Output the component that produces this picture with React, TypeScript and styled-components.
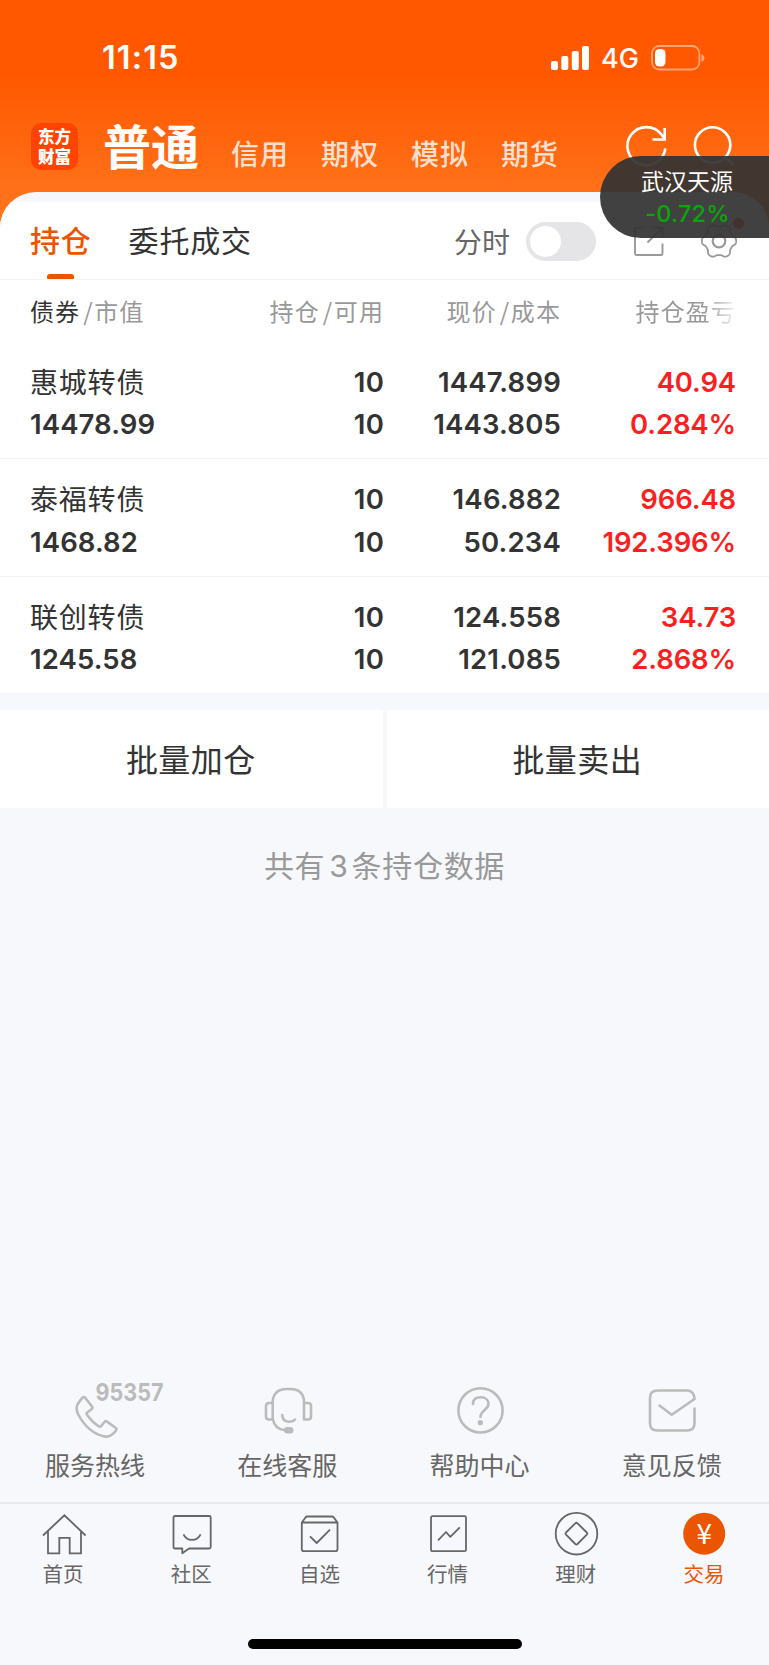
import React from 'react';
import styled, { createGlobalStyle, css } from 'styled-components';

const cjk = '"Noto Sans CJK SC", sans-serif';
const latin = 'Inter, "Noto Sans CJK SC", sans-serif';
const accent = '#eb5500';

const GlobalStyle = createGlobalStyle`
  *, *::before, *::after { box-sizing: border-box; }
  body { margin: 0; background: #f7f8fa; font-family: ${cjk}; color: #333; }
  svg { display: block; flex: none; overflow: visible; }
`;

const Screen = styled.div`
  position: relative;
  display: flex;
  flex-direction: column;
  width: 769px;
  height: 1665px;
  overflow: hidden;
  background: linear-gradient(#ff5800 0, #ff5800 74px, #ff7119 192px, #ff7620 240px, #f7f8fb 240px);
`;

const StatusBar = styled.div`
  display: flex;
  align-items: center;
  height: 115px;
  padding: 0 64px 0 102px;
  color: #fff;
  font-family: ${latin};
`;

const Clock = styled.span`
  flex: 1;
  font-size: 32.5px;
  font-weight: 600;
  letter-spacing: 1.1px;
`;

const Network = styled.span`
  width: 60px;
  padding: 3px 0 0 11px;
  margin-right: 1px;
  font-size: 27px;
  font-weight: 500;
  line-height: 32px;
`;

const AccountBar = styled.header`
  display: flex;
  height: 77px;
  padding: 0 33px 0 31px;
  color: #fff;
`;

const Logo = styled.div`
  display: flex;
  flex-direction: column;
  align-items: center;
  justify-content: center;
  width: 47px;
  height: 47px;
  margin-top: 8px;
  padding-bottom: 1px;
  border-radius: 10px;
  background: #ff4400;
  font-size: 16.5px;
  font-weight: 900;
  line-height: 20px;
`;

const ActiveAccount = styled.h1`
  width: 101px;
  margin: -2px 0 0 25px;
  font-size: 48px;
  font-weight: 700;
  line-height: 62px;
  white-space: nowrap;
`;

const AccountLinks = styled.nav`
  display: flex;
  flex: 1;
  gap: 32px;
  padding: 17px 0 0 27px;
`;

const AccountLink = styled.a`
  width: 58px;
  font-size: 28px;
  font-weight: 500;
  letter-spacing: 1px;
  line-height: 42px;
  color: #ffe0d0;
  white-space: nowrap;
`;

const AccountActions = styled.div`
  display: flex;
  gap: 23px;
  padding-top: 8px;
`;

const Panel = styled.main`
  display: flex;
  flex-direction: column;
  flex: 1;
  border-radius: 36px 36px 0 0;
  overflow: hidden;
  background: linear-gradient(#f6f7fa 10px, #fff 10px, #fff 60px, #f7f8fb 60px);
  padding-top: 10px;
`;

const TabBar = styled.div`
  display: flex;
  align-items: stretch;
  height: 78px;
  padding: 0 32px 0 30px;
  border-bottom: 1px solid #f3f3f5;
  background: #fff;
`;

const Tab = styled.div<{ $active?: boolean }>`
  display: flex;
  flex-direction: column;
  align-items: center;
  margin-right: 37px;
  padding-top: 14px;
  font-size: 30px;
  font-weight: ${p => (p.$active ? 500 : 400)};
  letter-spacing: 0.8px;
  line-height: 46px;
  color: ${p => (p.$active ? accent : '#333')};
  &::after {
    content: '';
    width: 27px;
    height: 6px;
    margin-top: 12px;
    border-radius: 3px 3px 1px 1px;
    background: ${p => (p.$active ? accent : 'transparent')};
  }
`;

const TabTools = styled.div`
  display: flex;
  align-items: center;
  margin-left: auto;
`;

const ToggleLabel = styled.span`
  margin-right: 16px;
  font-size: 28px;
  line-height: 40px;
  color: #666;
`;

const Toggle = styled.div`
  width: 70px;
  height: 39px;
  margin: 1px 37px 0 0;
  padding: 4px;
  border-radius: 20px;
  background: #e5e5e8;
  &::before {
    content: '';
    display: block;
    width: 31px;
    height: 31px;
    border-radius: 50%;
    background: #fff;
  }
`;

const GearSlot = styled.div`
  margin: 1px -6px 0 34px;
`;

const gridColumns = css`
  display: grid;
  grid-template-columns: 180px 174px 177px 175px;
  padding-left: 30px;
`;

const HeaderRow = styled.div`
  ${gridColumns}
  height: 62px;
  background: #fff;
  font-size: 24px;
  letter-spacing: 1.1px;
  line-height: 62px;
  color: #999;
`;

const HeaderCell = styled.span<{ $fade?: boolean }>`
  text-align: right;
  white-space: nowrap;
  &:first-child { text-align: left; }
  ${p => p.$fade && css`
    mask-image: linear-gradient(90deg, #000 143px, rgba(0, 0, 0, 0.12) 175px);
  `}
`;

const Strong = styled.span`
  color: #333;
`;

const Slash = styled.span`
  margin: 0 0.5px 0 3px;
`;

const HoldingRow = styled.div`
  ${gridColumns}
  height: 117.4px;
  padding-top: 19px;
  border-bottom: 1px solid #f2f3f5;
  background: #fff;
`;

const HoldingCell = styled.div<{ $gain?: boolean }>`
  display: flex;
  flex-direction: column;
  text-align: right;
  font-family: ${latin};
  font-size: 27.5px;
  font-weight: 600;
  letter-spacing: ${p => (p.$gain ? '-0.15px' : '0.2px')};
  line-height: 42.3px;
  color: ${p => (p.$gain ? '#fb1f1f' : '#333')};
  &:first-child { text-align: left; letter-spacing: 0.1px; }
`;

const BondName = styled.span`
  height: 42.3px;
  margin-top: -1px;
  margin-bottom: 1px;
  font-family: ${cjk};
  font-size: 28px;
  font-weight: 400;
  letter-spacing: 0.8px;
`;

const BatchActions = styled.div`
  display: grid;
  grid-template-columns: 1fr 1fr;
  gap: 4px;
  margin-top: 15.6px;
`;

const BatchButton = styled.button`
  height: 98px;
  padding: 0 1px 2px 0;
  border: 0;
  background: #fff;
  font-family: ${cjk};
  font-size: 32px;
  letter-spacing: 0.4px;
  color: #333;
`;

const Summary = styled.p`
  margin: 34px 0 0;
  font-size: 30px;
  letter-spacing: 0.7px;
  line-height: 44px;
  text-align: center;
  color: #999;
`;

const SummaryCount = styled.span`
  margin: 0 3px 0 4px;
  font-family: ${latin};
`;

const Services = styled.div`
  display: grid;
  grid-template-columns: repeat(4, 1fr);
  margin-top: auto;
  height: 123px;
`;

const Service = styled.div`
  display: flex;
  flex-direction: column;
  align-items: center;
  font-size: 25px;
  line-height: 36px;
  color: #666;
  svg { margin-bottom: 7px; color: #bbb; }
`;

const ServiceLabel = styled.span`
  padding-right: 2px;
`;

const NavBar = styled.nav`
  display: grid;
  grid-template-columns: repeat(6, 1fr);
  height: 127px;
  padding-top: 6px;
  border-top: 2px solid #e9eaed;
`;

const NavItem = styled.div<{ $active?: boolean }>`
  display: flex;
  flex-direction: column;
  align-items: center;
  font-size: 20.5px;
  line-height: 30px;
  color: ${p => (p.$active ? accent : '#666')};
`;

const NavLabel = styled.span`
  padding-right: 2px;
`;

const HomeIndicator = styled.div`
  width: 274px;
  height: 10px;
  margin: 10px auto 16px;
  border-radius: 5px;
  background: #000;
`;

const QuoteBubble = styled.aside`
  position: absolute;
  top: 156px;
  right: 0;
  width: 169px;
  height: 82px;
  padding: 7px 0 0 5px;
  border-radius: 41px 0 0 41px;
  background: rgba(51, 51, 51, 0.93);
  text-align: center;
  color: #fff;
  font-size: 23px;
  line-height: 34px;
`;

const QuoteChange = styled.div`
  padding: 1px 0 0 1px;
  font-family: ${latin};
  font-weight: 500;
  font-size: 23.5px;
  line-height: 31px;
  letter-spacing: 0.2px;
  color: #0aa50a;
`;

const SignalIcon = () => (
  <svg width="39" height="26" fill="#fff">
    <rect x="0" y="16" width="7" height="9" rx="2" />
    <rect x="10.3" y="11" width="7" height="14" rx="2" />
    <rect x="20.8" y="6" width="7" height="19" rx="2" />
    <rect x="31" y="1" width="7" height="24" rx="2" />
  </svg>
);

const BatteryIcon = () => (
  <svg width="54" height="26" fill="none">
    <rect x="0.9" y="1" width="47.5" height="23.5" rx="7.5" stroke="#fff" strokeOpacity=".45" strokeWidth="1.8" />
    <rect x="4" y="4" width="10.5" height="17.5" rx="4.5" fill="#fff" />
    <path d="M50.5 9v8q3-1.5 3-4t-3-4" fill="#fff" fillOpacity=".5" />
  </svg>
);

const RefreshIcon = () => (
  <svg width="44" height="44" fill="none" stroke="#fff" strokeWidth="2.6">
    <path d="M40.3 25.5A19 19 0 1 1 36.5 11.5L39.5 15.5" />
    <path d="M39.7 5V16.5H27.5" />
  </svg>
);

const SearchIcon = () => (
  <svg width="44" height="44" fill="none" stroke="#fff" strokeWidth="2.6">
    <circle cx="20.6" cy="22" r="17.7" />
    <path d="M33 34L41.5 42" />
  </svg>
);

const ShareIcon = () => (
  <svg width="32" height="32" viewBox="0 0 32 32" fill="none" stroke="#999" strokeWidth="1.9">
    <path d="M12 2.5H3.5Q2 2.5 2 4V28.5Q2 30 3.5 30H28Q29.5 30 29.5 28.5V18.5" />
    <path d="M18.5 2.5H29.5V12M29 3L14.5 17.5" />
  </svg>
);

const gearPath = Array.from({ length: 180 }, (_, i) => {
  const t = (i * Math.PI) / 90;
  const r = 15.6 + 1.7 * Math.tanh(1.6 * Math.cos(6 * t));
  return `${i ? 'L' : 'M'}${(20 + r * Math.cos(t)).toFixed(2)} ${(20 + r * Math.sin(t)).toFixed(2)}`;
}).join('') + 'Z';

const GearIcon = () => (
  <svg width="44" height="40" viewBox="0 0 44 40" fill="none" stroke="#999" strokeWidth="1.8" strokeLinejoin="round">
    <path d={gearPath} />
    <circle cx="20" cy="20" r="6.3" strokeWidth="2.2" />
    <circle cx="39.5" cy="2.3" r="5.5" fill="#f22" stroke="none" />
  </svg>
);

const ServiceIcon = ({ children }: { children: React.ReactNode }) => (
  <svg width="140" height="60" fill="none" stroke="currentColor" strokeWidth="2.6" strokeLinecap="round" strokeLinejoin="round">
    {children}
  </svg>
);

const services = [
  {
    label: '服务热线',
    icon: (
      <>
        <path d="M56.3 18.8Q57.8 17.2 59.2 18.8L66 27.5Q67 29 65.5 30.3L61.2 33.5Q60 34.6 61.2 36Q66.5 43.5 73 47.3Q74.2 48 75.2 47L78.5 43Q79.6 41.6 81 42.6L89.5 48.8Q91.3 50.2 89.8 51.8Q84.5 58.8 78.5 57.4Q62 54 52 35Q49.5 29.5 51.5 25.5Q53.5 22 56.3 18.8Z" />
        <text x="69.5" y="21.7" fill="currentColor" stroke="none" fontFamily="Inter" fontSize="24.5" fontWeight="700" textLength="68" lengthAdjust="spacingAndGlyphs">95357</text>
      </>
    ),
  },
  {
    label: '在线客服',
    icon: (
      <>
        <path d="M54.7 24V22Q56 10 69 10H72Q85 10 86 22V40.5H90Q93 40.5 93 37.5V27Q93 24 90 24H86M54.7 24H51Q48 24 48 27V37.5Q48 40.5 51 40.5H54.7V24M54.7 40Q57 50.5 67 51.2M64.3 36Q64.5 42.5 70.5 42.7Q75.5 42.5 77 40.5" />
        <rect x="66" y="48" width="9.5" height="6.5" rx="3.2" fill="currentColor" stroke="none" />
      </>
    ),
  },
  {
    label: '帮助中心',
    icon: (
      <>
        <circle cx="69.5" cy="31.4" r="22.1" />
        <path d="M62 25C62 20.5 65 18.3 69.8 18.3C74.5 18.3 77.5 21 77.5 24.8C77.5 31 69.5 31.2 69.5 38" />
        <circle cx="69.3" cy="43.7" r="2.6" fill="currentColor" stroke="none" />
      </>
    ),
  },
  {
    label: '意见反馈',
    icon: <path d="M91.500 29.500V44Q91.500 51.500 84 51.500H54.500Q47 51.500 47 44V19Q47 11.500 54.500 11.500H84Q91 11.500 91.500 20L68.700 35.800L56.500 26.500" />,
  },
];

const NavIcon = ({ children }: { children: React.ReactNode }) => (
  <svg width="48" height="48" fill="none" stroke="currentColor" strokeWidth="1.8" strokeLinejoin="round">
    {children}
  </svg>
);

const navItems = [
  {
    label: '首页',
    icon: <path d="M3 25.5L24.4 5.3L45.6 25.5M8 21.5V43.3H19.3V27.8H29.7V43.3H41V21.5" strokeLinejoin="miter" />,
  },
  {
    label: '社区',
    icon: (
      <>
        <path d="M7 6H41.2Q42.7 6 42.7 7.5V37Q42.7 38.5 41.2 38.5H21L14.3 43.2V38.5H7Q5.5 38.5 5.5 37V7.5Q5.5 6 7 6Z" />
        <path d="M15.5 24.3Q18 29.8 24 29.8Q30 29.8 32.6 24.3" />
      </>
    ),
  },
  {
    label: '自选',
    icon: (
      <>
        <path d="M5.8 12.5L9.5 7.5Q10 6.5 11.5 6.5H35.8Q37 6.5 37.8 7.5L41.500 12.5V39Q41.5 41.2 39.5 41.2H7.8Q5.8 41.2 5.8 39ZM5.8 12.5H41.5" />
        <path d="M14 26.3L20.7 33L34 19.7" />
      </>
    ),
  },
  {
    label: '行情',
    icon: (
      <>
        <rect x="6" y="6.2" width="35" height="35" rx="1.5" />
        <path d="M13 30.3L21 22L25.3 26.8L34.8 17.3" />
      </>
    ),
  },
  {
    label: '理财',
    icon: (
      <>
        <circle cx="23.5" cy="23.7" r="20.8" />
        <path d="M22.3 13.3Q23.4 12.3 24.5 13.3L33.8 22.5Q34.8 23.6 33.8 24.7L24.5 34Q23.4 35 22.3 34L13 24.7Q12 23.6 13 22.5Z" />
      </>
    ),
  },
  {
    label: '交易',
    active: true,
    icon: (
      <>
        <circle cx="23.2" cy="23.7" r="21" fill="currentColor" stroke="none" />
        <text x="23.2" y="34.3" fill="#fff" stroke="none" fontFamily="Noto Sans CJK SC" fontSize="28" fontWeight="400" textAnchor="middle">¥</text>
      </>
    ),
  },
];

const holdings = [
  { name: '惠城转债', value: '14478.99', qty: '10', usable: '10', price: '1447.899', cost: '1443.805', profit: '40.94', rate: '0.284%' },
  { name: '泰福转债', value: '1468.82', qty: '10', usable: '10', price: '146.882', cost: '50.234', profit: '966.48', rate: '192.396%' },
  { name: '联创转债', value: '1245.58', qty: '10', usable: '10', price: '124.558', cost: '121.085', profit: '34.73', rate: '2.868%' },
];

export default function App() {
  return (
    <>
      <GlobalStyle />
      <Screen>
        <StatusBar>
          <Clock>11:15</Clock>
          <SignalIcon />
          <Network>4G</Network>
          <BatteryIcon />
        </StatusBar>
        <AccountBar>
          <Logo><span>东方</span><span>财富</span></Logo>
          <ActiveAccount>普通</ActiveAccount>
          <AccountLinks>
            {['信用', '期权', '模拟', '期货'].map(name => <AccountLink key={name}>{name}</AccountLink>)}
          </AccountLinks>
          <AccountActions>
            <RefreshIcon />
            <SearchIcon />
          </AccountActions>
        </AccountBar>
        <Panel>
          <TabBar>
            <Tab $active>持仓</Tab>
            <Tab>委托成交</Tab>
            <TabTools>
              <ToggleLabel>分时</ToggleLabel>
              <Toggle />
              <ShareIcon />
              <GearSlot><GearIcon /></GearSlot>
            </TabTools>
          </TabBar>
          <HeaderRow>
            <HeaderCell><Strong>债券</Strong><Slash>/</Slash>市值</HeaderCell>
            <HeaderCell>持仓<Slash>/</Slash>可用</HeaderCell>
            <HeaderCell>现价<Slash>/</Slash>成本</HeaderCell>
            <HeaderCell $fade>持仓盈亏</HeaderCell>
          </HeaderRow>
          {holdings.map(h => (
            <HoldingRow key={h.name}>
              <HoldingCell><BondName>{h.name}</BondName><span>{h.value}</span></HoldingCell>
              <HoldingCell><span>{h.qty}</span><span>{h.usable}</span></HoldingCell>
              <HoldingCell><span>{h.price}</span><span>{h.cost}</span></HoldingCell>
              <HoldingCell $gain><span>{h.profit}</span><span>{h.rate}</span></HoldingCell>
            </HoldingRow>
          ))}
          <BatchActions>
            <BatchButton>批量加仓</BatchButton>
            <BatchButton>批量卖出</BatchButton>
          </BatchActions>
          <Summary>共有<SummaryCount>3</SummaryCount>条持仓数据</Summary>
          <Services>
            {services.map(s => (
              <Service key={s.label}>
                <ServiceIcon>{s.icon}</ServiceIcon>
                <ServiceLabel>{s.label}</ServiceLabel>
              </Service>
            ))}
          </Services>
          <NavBar>
            {navItems.map(n => (
              <NavItem key={n.label} $active={n.active}>
                <NavIcon>{n.icon}</NavIcon>
                <NavLabel>{n.label}</NavLabel>
              </NavItem>
            ))}
          </NavBar>
          <HomeIndicator />
        </Panel>
        <QuoteBubble>
          武汉天源
          <QuoteChange>-0.72%</QuoteChange>
        </QuoteBubble>
      </Screen>
    </>
  );
}
